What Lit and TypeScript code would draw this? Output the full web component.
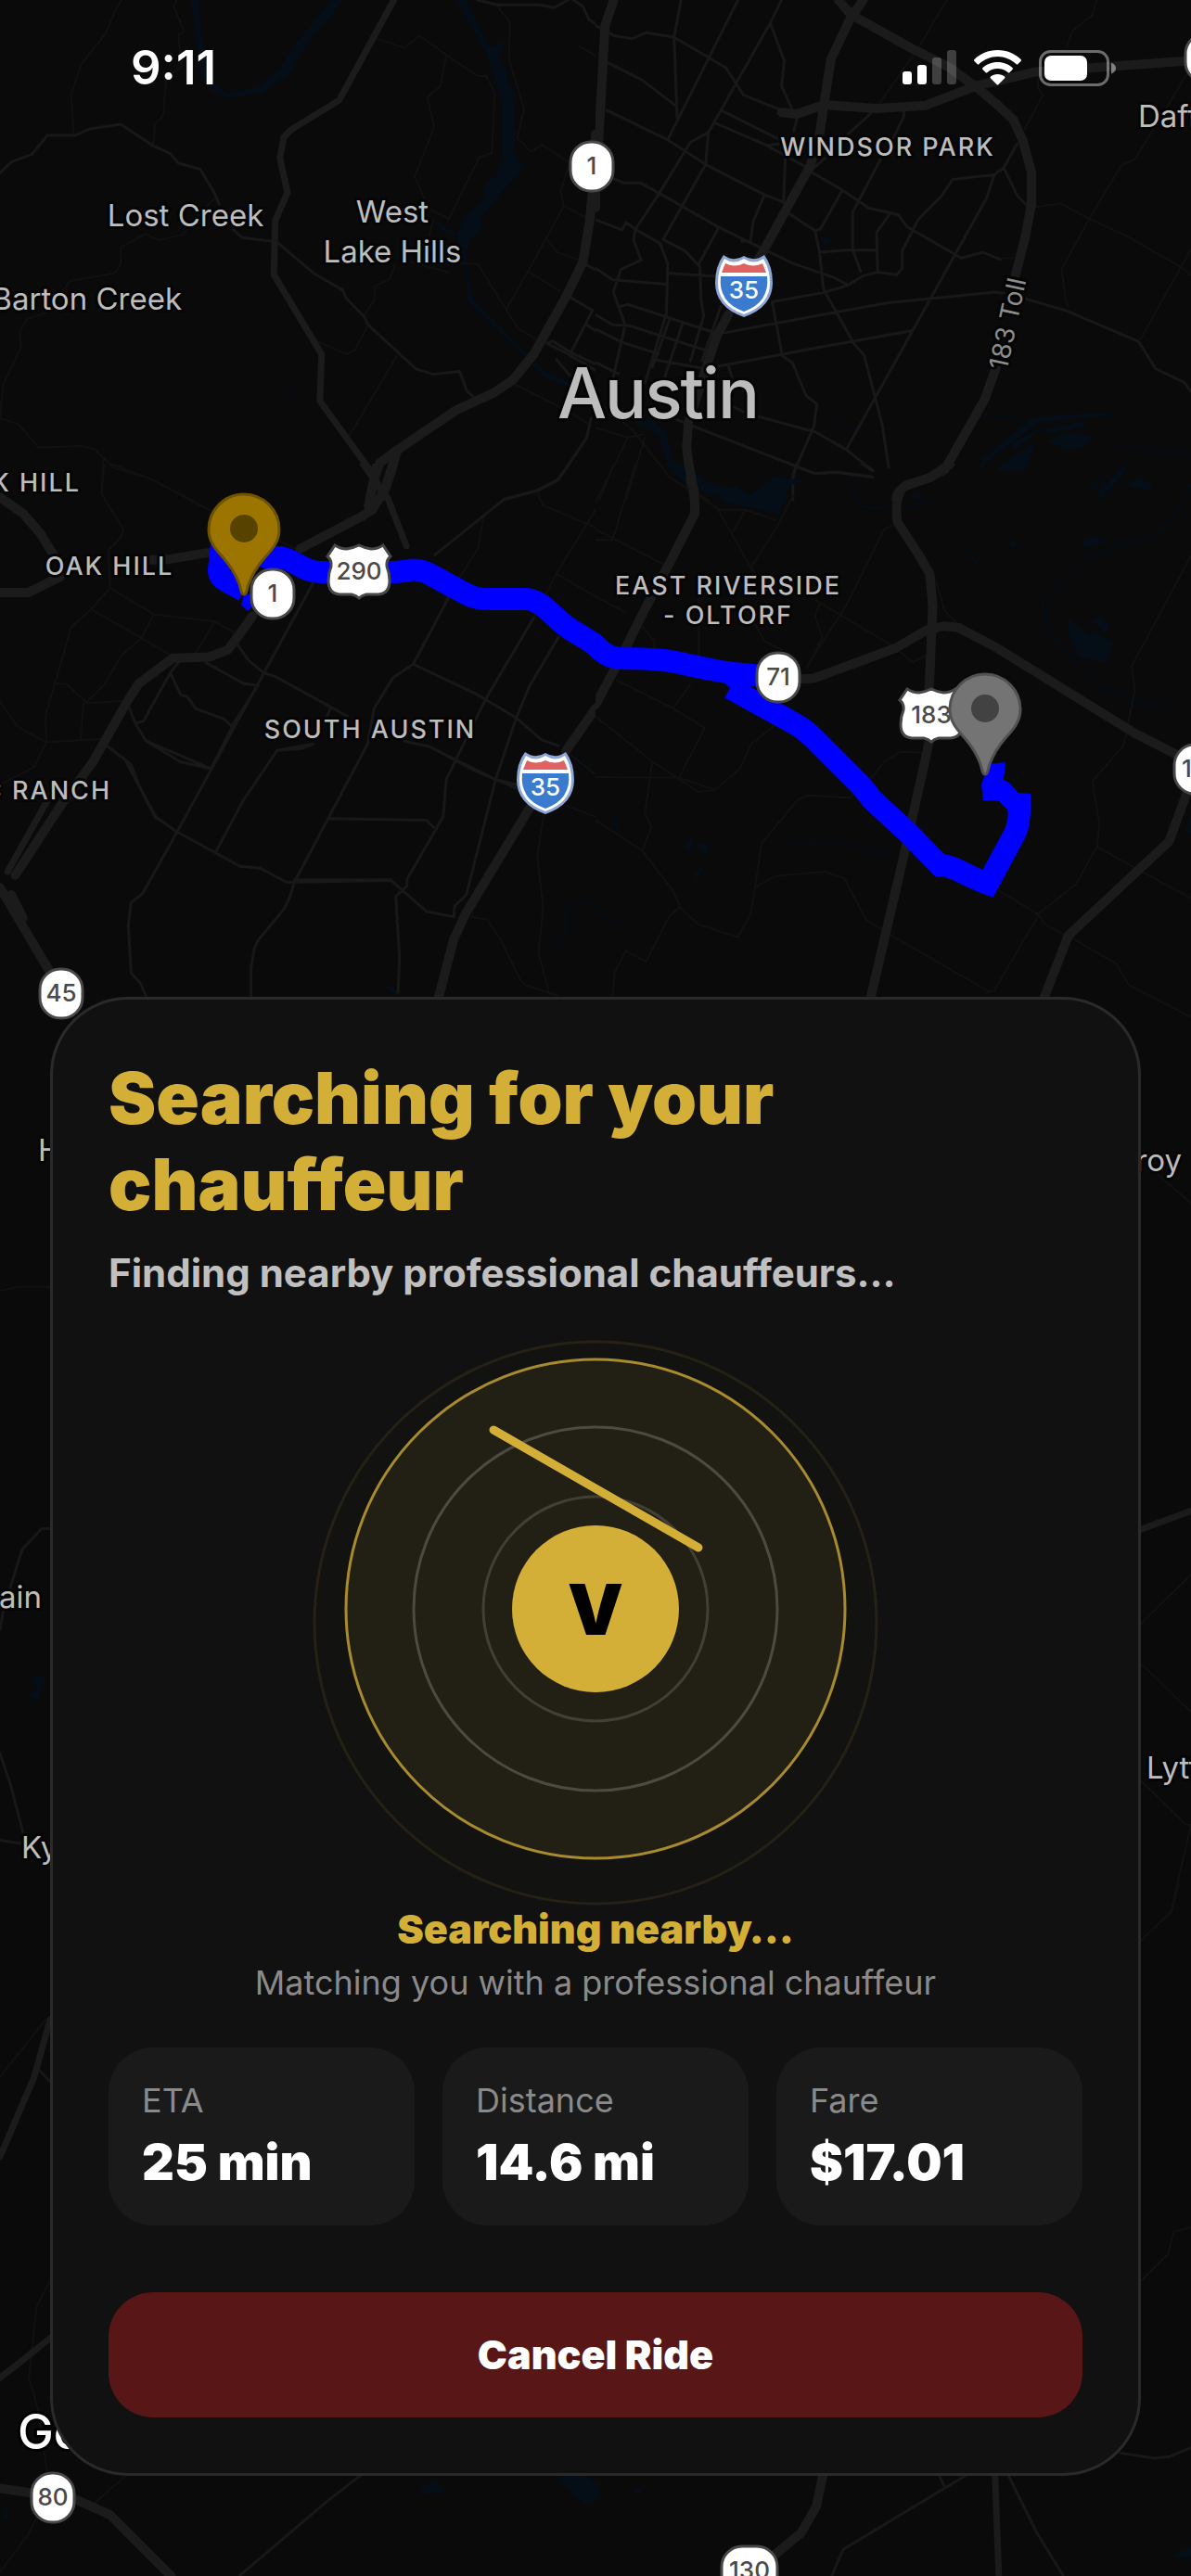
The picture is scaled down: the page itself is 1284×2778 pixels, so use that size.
import { LitElement, html, svg, css } from "lit";
import { customElement, property } from "lit/decorators.js";

interface Tile {
  x: number;
  y: number;
  width: number;
  height: number;
  viewBox: string;
  water?: string;
  stream?: string;
  local?: string;
  street?: string;
  road?: string;
  highway?: string;
}

// Each tile has its own coordinate grid and is stretched to its place on the map.
const TILES: Tile[] = [
  {
    x: 0,
    y: 0,
    width: 642,
    height: 540,
    viewBox: "0 0 1568 1568",
    water: `M502 0H522L532 120L550 215Q560 275 605 291L675 274L732 222L775 140L872 0H906L805 145L770 222L690 292L605 306L555 285L530 230L516 120Z
      M1200 0H1228L1292 148L1335 125L1315 180L1338 225L1335 250L1356 290V480L1381 523L1310 618L1265 685L1270 718L1237 748L1228 790L1232 870L1250 940L1390 1110L1440 1165L1505 1198L1500 1215L1430 1180L1380 1115L1240 955L1230 940L1226 830L1210 830L1205 740L1155 718L1140 685L1205 733L1222 682L1275 620V578L1306 550L1323 480V325L1300 235L1282 170Z
      M762 1200L778 1245L784 1300L774 1250Z`,
    local: `M320 0L305 30L278 105L213 203L187 300L194 417M465 0L458 22L485 98L470 110L478 210L438 240L430 362L408 388L404 450
      M990 120L1065 150L1105 112L1175 172L1258 238H1280L1303 290L1295 480L1262 492L1182 685L1130 655L1092 553L1143 398L1125 305L1160 268L1175 172
      M1310 20L1343 70L1340 185L1380 340L1362 432L1398 475L1427 453L1500 510L1476 600L1485 645L1390 850L1332 970
      M0 1310L48 1328L102 1402L215 1396L248 1406L300 1466L390 1496L510 1568M272 1440L267 1545
      M565 620L480 735L420 752L383 733L318 775L317 830L303 855L185 880L160 920L130 975L70 1000L52 1040L55 1090L8 1205L0 1310
      M838 1070L912 1109L935 1095L970 1018M1045 1115L912 1380M1040 830L1025 875L988 895L985 940L958 990
      M1215 825L1258 827L1330 965L1365 1030L1410 1060M1485 645L1545 682M1437 745L1468 790L1525 815M1390 850L1475 912
      M1080 820L1180 852M1350 1200L1500 1290L1550 1328M1525 145L1568 175M1140 690L1130 740`,
    street: `M0 541L30 507L84 483L125 424H197L235 404L318 389L405 458L447 480L470 511L527 530L565 605L577 640
      M615 720L637 744L728 757L825 855L902 908L912 935L958 990L970 1018L1095 1155L1140 1172L1210 1163L1230 1225L1250 1247
      M1257 0L1310 15H1420L1460 24L1495 0M1510 0L1535 20L1550 60L1568 75M1530 820L1568 845
      M1556 1310L1545 1370L1470 1503L1415 1537L1325 1565M1500 930L1560 972L1505 1100M1545 1018L1568 1035
      M1440 1075L1455 1068L1505 1105L1568 1140M1465 1125L1500 1175M1440 1075L1490 1105L1568 1160`,
    road: `M1037 0L893 314L768 405L747 430L737 495L757 603L725 690L721 860L847 1110L842 1255L985 1490L1015 1568`,
    highway: `M1568 420L1560 600L1553 690L1535 820L1490 930L1405 1110L1350 1190L1300 1230L1200 1285L1045 1410L1000 1450L985 1500L973 1568M1045 1415L1005 1560`,
  },
  {
    x: 642,
    y: 0,
    width: 642,
    height: 540,
    viewBox: "0 0 1568 1568",
    water: `M1012 1475L1020 1435L1150 1307L1345 1290L1387 1335L1345 1302L1165 1325L1035 1440ZM1180 1335L1092 1390L1108 1410ZM1160 1380L1050 1473H1132Z
      M1183 1345L1280 1318L1297 1335L1183 1360ZM1187 1380L1250 1353L1310 1368L1285 1400L1240 1407ZM590 735L628 755L602 773Z
      M95 1320L145 1310L185 1350L200 1430L235 1480L345 1530L375 1520L405 1555L470 1490L565 1505L510 1520L490 1568H345L240 1520L190 1460L165 1360Z
      M1395 1450L1398 1475L1330 1568L1322 1540ZM1397 1520L1425 1497L1465 1510L1467 1535ZM1305 1520L1340 1483L1318 1530Z`,
    stream: `M1370 1385L1382 1408L1550 1410L1568 1425M975 1293L1108 1309M635 1320L715 1365M667 1508L690 1568`,
    local: `M925 0L850 150L750 320M1318 0L1310 45L1257 95L1240 150M1568 210L1420 500L1385 517L1300 685L1227 845L1237 930L1245 960
      M1160 648L1225 637L1300 685L1400 740L1540 835L1568 860M1568 780L1435 1062M1165 245V275L1178 298L1130 405
      M85 1370L40 1480L10 1568M130 1370L80 1568M0 1250L100 1350L195 1495L300 1568M1065 810L1100 808M0 1340L85 1370L125 1360`,
    street: `M0 80L50 112L97 121L133 102L207 117L305 185L343 212L390 298L490 345M225 0L207 117L215 370M30 195L122 250L210 330M375 0L190 438
      M490 0L460 72L297 415L250 445L168 605L105 718L80 697L70 720L0 688M460 72L497 190L490 270L530 375L522 410
      M30 345L190 438L290 515L445 610L500 635M297 415L290 515L178 750M335 348L482 435M315 385L450 455L565 530M450 455L490 450
      M0 535L75 573H118L168 605L325 712L520 825L630 870L665 893M445 610L415 695L408 755L385 755M325 712L270 830M500 490L495 635
      M812 350V365L785 430M750 500L677 665V780L698 850M725 355L665 420M605 495L570 530
      M570 540L650 595L720 652L797 672L820 710L963 808L1020 790L1065 812M650 595L592 718L578 722L505 665
      M578 722L590 790L600 905L680 1075L707 1112L755 1330L772 1462M590 790L660 783H738M775 670L740 728L743 852
      M1110 450L1075 525L1050 547L940 562L910 615L850 687L808 785V840L793 860L743 852L702 865L665 893L605 915L465 945
      M1050 547L1030 620L835 1035L660 1408M1075 525L1112 615L1138 645M340 1042L575 990L770 948L1050 915L1075 918
      M1130 935L1240 973L1430 1070L1475 1155L1550 1197L1568 1225M310 1150L600 1085L835 1035
      M465 945L492 1115L518 1135L555 1240L583 1265L575 1335L520 1485V1568M105 718L170 762L190 825L187 980L130 1200
      M105 720L100 750L120 815L67 843L47 915L78 1018L45 1190M0 840L45 876L187 890M190 855L315 865
      M65 960L85 953L310 1040M0 985L45 1017L90 1020L298 1100M0 1030L70 1072L165 1108
      M178 750L235 785L275 835L278 940L285 990L250 1130M330 960L280 1130M195 1000L150 1150M230 1010L180 1190
      M150 1125L290 1155M0 1135L60 1170M215 1315L578 1483L635 1478L730 1493M430 1305L580 1353L660 1408L730 1473M350 1145L360 1185M365 1275L390 1290`,
    highway: `M48 0L25 80L15 300L8 440M0 590V650M705 0L670 60L620 185L605 300L590 420L565 520L500 660L445 780L395 880
      M350 985L320 1050L300 1120L270 1230L245 1320L240 1400L250 1500L262 1568M640 0L672 45L830 150L930 210L1000 270L1060 330L1100 375L1125 440L1148 540V640L1130 750L1105 865
      M1055 1150L1025 1250L920 1470L880 1495L820 1520Q790 1540 792 1568M490 352L530 357L600 328L740 340L870 330L1000 270L1160 225L1568 190`,
  },
  {
    x: 0,
    y: 500,
    width: 642,
    height: 600,
    viewBox: "0 0 1568 1568",
    water: `M1000 1462L1040 1480L1052 1500H1040Z`,
    stream: `M1568 1250L1542 1230L1490 1247V1325L1450 1385L1425 1397M1545 820L1522 880`,
    local: `M290 0L390 40L550 130L780 240M275 0L267 85L325 185L320 205L285 245L290 350L240 410L188 460L120 710L122 785L90 855L0 905
      M240 410L450 540M290 350L405 425L565 445L640 490M565 445L515 535M405 425L370 495L320 540L275 622L230 670M145 620L175 622L230 675L335 668
      M0 670L45 740L120 785L275 775M220 675L212 775M1275 145L1258 240L1175 380M1568 130L1465 310L1405 435M1465 310L1568 375
      M1415 80L1430 118L1568 180M1432 985L1415 1105L1430 1250L1418 1380L1447 1495M1240 1277L1283 1285L1320 1345L1370 1455L1385 1470L1470 1500
      M1500 820L1568 875M1480 960L1568 995`,
    street: `M825 335L695 590L455 1060L375 1212L345 1237L338 1300L345 1435L370 1465L385 1503
      M1180 380L1088 565L1035 603L985 690L968 790L775 1180L762 1225L748 1255L680 1343L670 1365L661 1420V1503
      M1088 565L1255 650L1358 715L1425 778L1470 795M1405 435L1278 665L1175 890L1167 995L1072 1170V1190L1042 1220L1052 1390L1048 1490
      M1470 490L1395 625L1360 715L1305 890L1228 1215L1197 1247L1195 1275M625 510L655 555L695 590L725 600L915 712
      M540 560L642 620L680 625L610 740L590 720L515 690L492 655L477 653L448 590L378 725L360 732M470 560L448 590
      M335 675L358 735L385 782L475 840L555 860L615 735M385 782L475 822L555 860
      M275 790L345 847L365 905L410 995L462 1035L632 1135L685 1140L755 1180L1030 1175L1123 1262L1195 1277
      M275 790L330 835L410 1000M568 1095L640 950L730 808L795 803L825 790M730 808L780 798L825 790M862 1000L1123 1005L1142 1025
      M1065 782L1130 797L1250 865L1360 915M1130 797L1305 890L1360 905M870 690L860 715M775 1173H1030
      M1145 257L1328 100L1415 75L1468 45L1500 0`,
    road: `M955 0L1020 95L1070 232M140 920L20 1150`,
    highway: `M0 95L60 140L105 195L140 255M0 363H75L160 318M380 272L440 270L555 250M1037 0L1015 70L980 130L950 150L790 240M993 0L970 120
      M665 430L600 525L550 545L455 548L365 620L335 670L245 840L165 955L40 1160M0 1195L130 1430M1568 690L1490 810M1395 970L1225 1270L1195 1340L1155 1503M30 1215L60 1280`,
  },
  {
    x: 642,
    y: 500,
    width: 642,
    height: 600,
    viewBox: "0 0 1568 1568",
    water: `M190 0H225L345 85L372 60L405 92L470 35L565 48L515 60L482 145L345 108L240 40ZM835 82L875 95L835 98ZM1090 212L1120 230L1092 237Z
      M965 233L1012 282L1005 288ZM1283 213L1320 202L1338 225L1285 238ZM1242 432L1300 485L1310 475L1367 503L1342 562L1270 543L1242 465Z
      M1310 445L1325 428L1355 450L1342 480ZM1395 0V20L1330 100L1322 85ZM1400 65L1425 40L1465 55V75Z
      M232 1080L260 1048L252 1092ZM262 1072L297 1068L292 1110ZM255 1155L287 1130L268 1178ZM30 980L62 1020L58 1035ZM1568 990L1550 1035L1568 1045Z
      M1305 70L1340 30L1320 65ZM1050 20L1070 0H1140L1132 20Z`,
    stream: `M667 50L697 120L740 127L887 108M1568 60L1560 90L1478 205L1285 263L1175 385L1195 475L1330 635L1485 682L1525 660
      M500 1062L630 1060L800 1115M0 1250L65 1300`,
    local: `M780 175L760 185L660 400L555 575M325 130H395L475 160M395 130L360 195M520 90L480 175L410 290M190 35L320 125L410 295L430 330
      M0 185L190 290M55 610L205 690L288 745L220 885L315 920L380 860L410 790L480 730M250 620L205 690M0 712L150 840L270 925L315 920M0 883L220 885
      M150 840L130 985L147 1025L123 1090L0 1005M123 1090L205 1205L222 1250L270 1298L375 1335L408 1270L420 1195L437 1070L533 947L560 935L670 942L700 905
      M222 1250L195 1275L133 1403L80 1373L50 1435L45 1503M420 1195L470 1163L605 1150L655 1168L712 1285L775 1327L1035 1487M1165 1275L1050 1485L1030 1490
      M715 900L765 835L805 812L865 815M1050 1195L1165 1270L1185 1300L1250 1335L1370 1408L1405 1470L1568 1560
      M1165 1270L1265 1185L1320 1080L1327 1015L1308 895L1390 795L1420 640L1412 570L1568 260M1320 1080L1568 1225
      M580 385L785 515L835 560L870 540M590 395L578 430L597 490L560 570M890 310L920 415L960 460M272 380V540M0 215L45 215L105 0M50 0L0 110
      M380 380L445 500L490 525M0 375L80 420M120 455L155 500V520`,
    street: `M510 0L578 28L635 25L730 38M700 0L730 20M530 0L520 40`,
    highway: `M245 0L260 80L262 140L190 290L130 410L65 550L0 680M935 0L880 40L820 60Q785 80 795 165L850 255L880 310L888 400L880 600L878 640
      M878 785L865 850L815 1090L725 1503M545 607L575 605L790 520L870 470L915 458L955 462L1050 515L1420 760L1530 820M1560 920L1510 1065L1245 1330L1182 1503`,
  },
  {
    x: 0,
    y: 1100,
    width: 200,
    height: 1000,
    viewBox: "0 0 600 1568",
    water: `M85 1143L120 1132L98 1110L152 1110L118 1151Z`,
    local: `M0 458L60 451H165`,
    street: `M0 1030L12 995L72 895L135 860H165M0 1240L35 1295L75 1375M0 1387L75 1393`,
  },
  {
    x: 1084,
    y: 1100,
    width: 200,
    height: 1000,
    viewBox: "0 0 600 1568",
    local: `M435 1022L600 938M435 1087L600 1170M480 255L600 310M435 1285L585 1361H600L535 1507L435 1558`,
    road: `M435 862L600 830`,
  },
  {
    x: 0,
    y: 2030,
    width: 1284,
    height: 748,
    viewBox: "0 0 1568 1568",
    water: `M552 1372L575 1352L588 1378L558 1384ZM735 1342H770L788 1360V1395L772 1408L740 1360ZM832 1368L848 1373L838 1385ZM1542 1522L1568 1500V1530ZM4 1410H10V1440H4Z`,
    local: `M60 310L0 440M66 900L48 960L38 1120L50 1190L66 1380L35 1480L0 1560M165 1342L120 1410M1568 780L1545 790L1538 840L1503 900M1552 0L1543 65L1503 130`,
    street: `M52 425L66 450M475 1340L430 1400L315 1568M1270 1342L1110 1508L1095 1568M1328 1342L1365 1470L1400 1568M1237 1342L1243 1365M1475 1290L1520 1302L1540 1298L1568 1278`,
    road: `M66 310L45 440L0 620M66 1030L30 1080L0 1120M1310 1342L1315 1568`,
    highway: `M0 1370L100 1395L145 1430L225 1568M1083 1342L1075 1410L1055 1470L1020 1520`,
  },
];

interface Label {
  text: string;
  x: number;
  y: number;
  kind: string;
}

const LABELS: Label[] = [
  { text: "Lost Creek", x: 200, y: 244, kind: "town" },
  { text: "West", x: 423, y: 240, kind: "town" },
  { text: "Lake Hills", x: 423, y: 283, kind: "town" },
  { text: "Barton Creek", x: 196, y: 334, kind: "town end" },
  { text: "Daffan", x: 1227, y: 137, kind: "town start" },
  { text: "Hays", x: 41, y: 1252, kind: "town start" },
  { text: "Mountain", x: 45, y: 1734, kind: "town end" },
  { text: "Kyle", x: 23, y: 2004, kind: "town start" },
  { text: "Elroy", x: 1274, y: 1263, kind: "town end" },
  { text: "Lytton", x: 1236, y: 1918, kind: "town start" },
  { text: "Austin", x: 709, y: 451, kind: "city" },
  { text: "WINDSOR PARK", x: 957, y: 168, kind: "area" },
  { text: "OAK HILL", x: 87, y: 530, kind: "area end" },
  { text: "OAK HILL", x: 118, y: 620, kind: "area" },
  { text: "SOUTH AUSTIN", x: 399, y: 796, kind: "area" },
  { text: "CIRCLE C RANCH", x: 120, y: 862, kind: "area end" },
  { text: "EAST RIVERSIDE", x: 785, y: 641, kind: "area" },
  { text: "- OLTORF", x: 785, y: 673, kind: "area" },
];

const STATE_ROADS = [
  { text: "1", x: 638, y: 179, width: 46 },
  { text: "1", x: 294, y: 640, width: 46 },
  { text: "71", x: 839, y: 730, width: 46 },
  { text: "45", x: 66, y: 1071, width: 46 },
  { text: "80", x: 57, y: 2693, width: 46 },
  { text: "130", x: 808, y: 2772, width: 60 },
  { text: "130", x: 1296, y: 829, width: 60 },
  { text: "130", x: 1308, y: 62, width: 60 },
];

@customElement("ride-map")
export class RideMap extends LitElement {
  static styles = css`
    :host {
      display: block;
    }
    .map {
      display: block;
      width: 100%;
      height: 100%;
      background: #0a0a0a;
      font-family: Inter, "Liberation Sans", sans-serif;
    }
    .tile path {
      vector-effect: non-scaling-stroke;
      fill: none;
      stroke-linejoin: round;
      stroke-linecap: round;
    }
    .tile .water {
      fill: #050d17;
    }
    .stream {
      stroke: #050d17;
      stroke-width: 2px;
    }
    .local {
      stroke: #111;
      stroke-width: 2px;
    }
    .street {
      stroke: #181818;
      stroke-width: 3px;
    }
    .road {
      stroke: #1b1b1b;
      stroke-width: 7px;
    }
    .highway {
      stroke: #1b1b1b;
      stroke-width: 10px;
    }
    .route {
      fill: none;
      stroke: #0000ff;
      stroke-width: 24px;
      stroke-linejoin: miter;
    }
    .route-end {
      fill: #0000ff;
    }
    .label {
      fill: #bdbdbd;
      stroke: #050505;
      stroke-width: 6px;
      stroke-linejoin: round;
      paint-order: stroke;
      text-anchor: middle;
    }
    .town {
      font-size: 33px;
    }
    .area {
      font-size: 27px;
      font-weight: 500;
      letter-spacing: 2px;
    }
    .city {
      font-size: 75px;
      font-weight: 500;
      letter-spacing: -2px;
    }
    .toll {
      font-size: 28px;
      fill: #8c8c8c;
    }
    .start {
      text-anchor: start;
    }
    .end {
      text-anchor: end;
    }
    .logo {
      font-size: 52px;
      font-weight: 500;
      fill: #fff;
      stroke: #000;
      text-anchor: start;
    }
    .number {
      font-size: 26px;
      font-weight: 500;
      fill: #4a4a4a;
      text-anchor: middle;
    }
    .number.light {
      fill: #fff;
    }
    .plate {
      fill: #fff;
      stroke: #484848;
      stroke-width: 3px;
    }
  `;

  private renderTile(t: Tile) {
    return svg`
      <svg class="tile" x=${t.x} y=${t.y} width=${t.width} height=${t.height}
        viewBox=${t.viewBox} preserveAspectRatio="none">
        <path class="water" d=${t.water ?? ""} />
        <path class="stream" d=${t.stream ?? ""} />
        <path class="local" d=${t.local ?? ""} />
        <path class="street" d=${t.street ?? ""} />
        <path class="road" d=${t.road ?? ""} />
        <path class="highway" d=${t.highway ?? ""} />
      </svg>
    `;
  }

  private renderStateRoad(text: string, x: number, y: number, width: number) {
    return svg`
      <g transform="translate(${x} ${y})">
        <rect class="plate" x=${-width / 2} y="-26" width=${width} height="53" rx="22" />
        <text class="number" y="9">${text}</text>
      </g>
    `;
  }

  private renderUsRoad(text: string, x: number, y: number) {
    return svg`
      <g transform="translate(${x} ${y})">
        <path class="plate" d="M-26 -28Q-20 -24 -13 -24Q-6 -25 0 -28Q6 -25 13 -24Q20 -24 26 -28L34 -16Q29 -12 30 -5Q33 2 33 10Q33 24 21 25H8Q3 26 0 29Q-3 26 -8 25H-21Q-33 24 -33 10Q-33 2 -30 -5Q-29 -12 -34 -16Z" />
        <text class="number" y="9">${text}</text>
      </g>
    `;
  }

  private renderInterstate(text: string, x: number, y: number) {
    return svg`
      <g transform="translate(${x} ${y})">
        <path d="M-22 -33Q-11 -25 0 -32Q11 -25 22 -33Q31 -21 31 -3Q31 23 0 34Q-31 23 -31 -3Q-31 -21 -22 -33Z" fill="#8aa5d6" />
        <path d="M-21 -29Q-11 -22 0 -29Q11 -22 21 -29Q28 -18 28 -3Q28 21 0 31Q-28 21 -28 -3Q-28 -18 -21 -29Z" fill="#fff" />
        <path d="M-20 -24Q-10 -19 0 -24Q10 -19 20 -24L24 -14H-24Z" fill="#de6262" />
        <path d="M-25 -10H25Q28 18 0 28Q-28 18 -25 -10Z" fill="#3a7bcd" />
        <text class="number light" y="14">${text}</text>
      </g>
    `;
  }

  private renderPin(x: number, y: number, fill: string, edge: string, dot: string) {
    return svg`
      <g transform="translate(${x} ${y})">
        <path d="M0 -1C-3 -1 -3 -6 -5 -12C-9 -23 -15 -32 -21 -39C-31 -50 -38 -58 -38 -71A38 38 0 0 1 38 -71C38 -58 31 -50 21 -39C15 -32 9 -23 5 -12C3 -6 3 -1 0 -1Z"
          fill=${fill} stroke=${edge} stroke-width="3" />
        <circle cy="-72" r="15" fill=${dot} />
      </g>
    `;
  }

  render() {
    return html`
      <svg
        class="map"
        viewBox="0 0 1284 2778"
        preserveAspectRatio="xMidYMin slice"
        role="img"
        aria-label="Route map"
      >
        ${TILES.map((t) => this.renderTile(t))}
        <path
          class="route"
          d="M263 637L243 626Q233 620 237 608L239 586L287 601H303C318 604 328 617 345 617H422C440 617 446 611 461 618L496 637C510 645 515 646 530 646H569C587 649 597 667 614 678L640 694C650 704 655 709 670 710C710 710 725 713 742 717C775 724 790 727 825 729"
        />
        <path
          class="route"
          d="M804 728L792 745M787 742L845 774C862 783 868 787 877 796L929 848L941 863L980 899L1013 933C1028 933 1040 944 1065 953L1094 899C1099 889 1099 880 1099 856"
        />
        <path class="route-end" d="M263 641L260 652L267 659L273 652V640Z" />
        <path
          class="route-end"
          d="M1066 824L1084 822L1082 841L1088 844L1098 855L1111 856V878H1087L1086 873L1076 863H1060L1058 846Z"
        />
        ${LABELS.map(
          (l) => svg`<text class="label ${l.kind}" x=${l.x} y=${l.y}>${l.text}</text>`
        )}
        <text class="label toll" transform="translate(1096 351) rotate(-78)">183 Toll</text>
        <text class="label logo" x="19" y="2641">Google</text>
        ${STATE_ROADS.map((r) => this.renderStateRoad(r.text, r.x, r.y, r.width))}
        ${this.renderUsRoad("290", 387, 616)} ${this.renderUsRoad("183", 1004, 771)}
        ${this.renderInterstate("35", 802, 308)} ${this.renderInterstate("35", 588, 844)}
        ${this.renderPin(263, 642, "#9b7500", "#6e5300", "#584200")}
        ${this.renderPin(1062, 836, "#747474", "#525252", "#424242")}
      </svg>
    `;
  }
}

@customElement("status-bar")
export class StatusBar extends LitElement {
  static styles = css`
    :host {
      display: flex;
      justify-content: space-between;
      align-items: center;
      padding: 42px 81px 0 141px;
      color: #fff;
    }
    .time {
      font-size: 51px;
      line-height: 62px;
      font-weight: 600;
    }
    .icons {
      display: flex;
      align-items: center;
      gap: 19px;
    }
    .icons svg {
      display: block;
    }
  `;

  render() {
    return html`
      <span class="time">9:11</span>
      <div class="icons">
        <svg width="58" height="38" viewBox="0 0 58 38" fill="#fff" aria-label="Signal">
          <rect y="23" width="10" height="14" rx="3" />
          <rect x="16" y="16" width="10" height="21" rx="3" />
          <rect x="32" y="8" width="10" height="29" rx="3" opacity="0.22" />
          <rect x="48" width="10" height="37" rx="3" opacity="0.22" />
        </svg>
        <svg width="51" height="38" viewBox="0 0 51 38" fill="#fff" aria-label="Wi-Fi">
          <path d="M25.500 0C35.500 0 44.500 4 50.500 10Q51.500 11 50.500 12L47.500 15Q46.500 16 45.500 15C40 10 33 7 25.500 7S11 10 5.500 15Q4.500 16 3.500 15L0.500 12Q-0.500 11 0.500 10C6.500 4 15.500 0 25.500 0Z" />
          <path d="M25.500 13C32 13 37.500 15.500 41.500 19Q42.500 20 41.500 21L38.500 24Q37.500 25 36.500 24C33.500 21.500 30 20 25.500 20S17.500 21.500 14.500 24Q13.500 25 12.500 24L9.500 21Q8.500 20 9.500 19C13.500 15.500 19 13 25.500 13Z" />
          <path d="M25.500 26C28.500 26 31 27 33 28.500Q34 29.500 33 30.500L26.500 37Q25.500 38 24.500 37L18 30.500Q17 29.500 18 28.500C20 27 22.500 26 25.500 26Z" />
        </svg>
        <svg width="83" height="39" viewBox="0 0 83 39" aria-label="Battery">
          <rect x="1.500" y="1.500" width="73" height="36" rx="11" fill="none" stroke="#fff" stroke-opacity="0.4" stroke-width="3" />
          <rect x="6" y="6" width="46" height="27" rx="7" fill="#fff" />
          <path d="M78 13.500Q83 15.500 83 19.500T78 25.500Z" fill="#fff" fill-opacity="0.45" />
        </svg>
      </div>
    `;
  }
}

@customElement("search-radar")
export class SearchRadar extends LitElement {
  static styles = css`
    :host {
      display: block;
    }
    .radar {
      display: block;
      width: 600px;
      max-width: 100%;
      margin: 0 auto;
      overflow: visible;
    }
    .letter {
      font-family: Inter, "Liberation Sans", sans-serif;
      font-size: 76px;
      font-weight: 900;
      text-anchor: middle;
    }
  `;

  render() {
    return html`
      <svg class="radar" viewBox="0 0 600 600" role="img" aria-label="Searching">
        <circle cx="300" cy="300" r="303" fill="#d4af37" fill-opacity="0.01" stroke="#d4af37" stroke-opacity="0.1" stroke-width="3" />
        <circle cx="300" cy="285" r="269" fill="#222015" stroke="#a88b2e" stroke-width="3" />
        <circle cx="300" cy="285" r="196" fill="none" stroke="#4d4a42" stroke-width="3" />
        <circle cx="300" cy="285" r="121" fill="none" stroke="#423f33" stroke-width="3" />
        <path d="M190 92L411 219" stroke="#d4af37" stroke-width="9" stroke-linecap="round" />
        <circle cx="300" cy="285" r="90" fill="#d4af37" />
        <text class="letter" x="300" y="313">V</text>
      </svg>
    `;
  }
}

@customElement("ride-stat")
export class RideStat extends LitElement {
  static styles = css`
    :host {
      display: flex;
      flex-direction: column;
      gap: 12px;
      padding: 36px;
      border-radius: 48px;
      background: #1a1a1a;
    }
    .label {
      font-size: 36px;
      line-height: 43px;
      color: #8a8a8a;
    }
    .value {
      font-size: 54px;
      line-height: 65px;
      font-weight: 900;
      color: #fff;
    }
  `;

  @property() label = "";
  @property() value = "";

  render() {
    return html`
      <span class="label">${this.label}</span>
      <span class="value">${this.value}</span>
    `;
  }
}

@customElement("app-root")
export class AppRoot extends LitElement {
  static styles = css`
    :host {
      display: block;
      font-family: Inter, "Liberation Sans", sans-serif;
    }
    .screen {
      position: relative;
      display: flex;
      flex-direction: column;
      justify-content: space-between;
      min-height: 100vh;
      overflow: hidden;
      background: #0a0a0a;
    }
    .backdrop {
      position: absolute;
      inset: 0;
    }
    .bar,
    .card {
      z-index: 1;
    }
    .card {
      margin: 0 54px 108px;
      padding: 60px;
      border: 3px solid #2a2a2a;
      border-radius: 84px;
      background: #111;
    }
    .title {
      margin: 0;
      font-size: 77px;
      line-height: 93px;
      font-weight: 900;
      color: #d4af37;
    }
    .subtitle {
      margin: 24px 0 52px;
      font-size: 42px;
      line-height: 50px;
      font-weight: 700;
      color: #c0c0c0;
    }
    .status {
      margin: 5px 0 12px;
      font-size: 43px;
      line-height: 50px;
      font-weight: 900;
      text-align: center;
      color: #d4af37;
    }
    .hint {
      margin: 0;
      font-size: 36px;
      line-height: 43px;
      text-align: center;
      color: #8a8a8a;
    }
    .stats {
      display: grid;
      grid-template-columns: repeat(3, 1fr);
      gap: 30px;
      margin: 48px 0 72px;
    }
    .cancel {
      display: block;
      width: 100%;
      padding: 42px;
      border: 0;
      border-radius: 48px;
      background: #591616;
      font: 900 43px/51px Inter, "Liberation Sans", sans-serif;
      color: #fff;
      cursor: pointer;
    }
  `;

  render() {
    return html`
      <main class="screen">
        <ride-map class="backdrop"></ride-map>
        <status-bar class="bar"></status-bar>
        <section class="card">
          <h1 class="title">Searching for your chauffeur</h1>
          <p class="subtitle">Finding nearby professional chauffeurs…</p>
          <search-radar></search-radar>
          <p class="status">Searching nearby…</p>
          <p class="hint">Matching you with a professional chauffeur</p>
          <div class="stats">
            <ride-stat label="ETA" value="25 min"></ride-stat>
            <ride-stat label="Distance" value="14.6 mi"></ride-stat>
            <ride-stat label="Fare" value="$17.01"></ride-stat>
          </div>
          <button class="cancel" type="button">Cancel Ride</button>
        </section>
      </main>
    `;
  }
}
